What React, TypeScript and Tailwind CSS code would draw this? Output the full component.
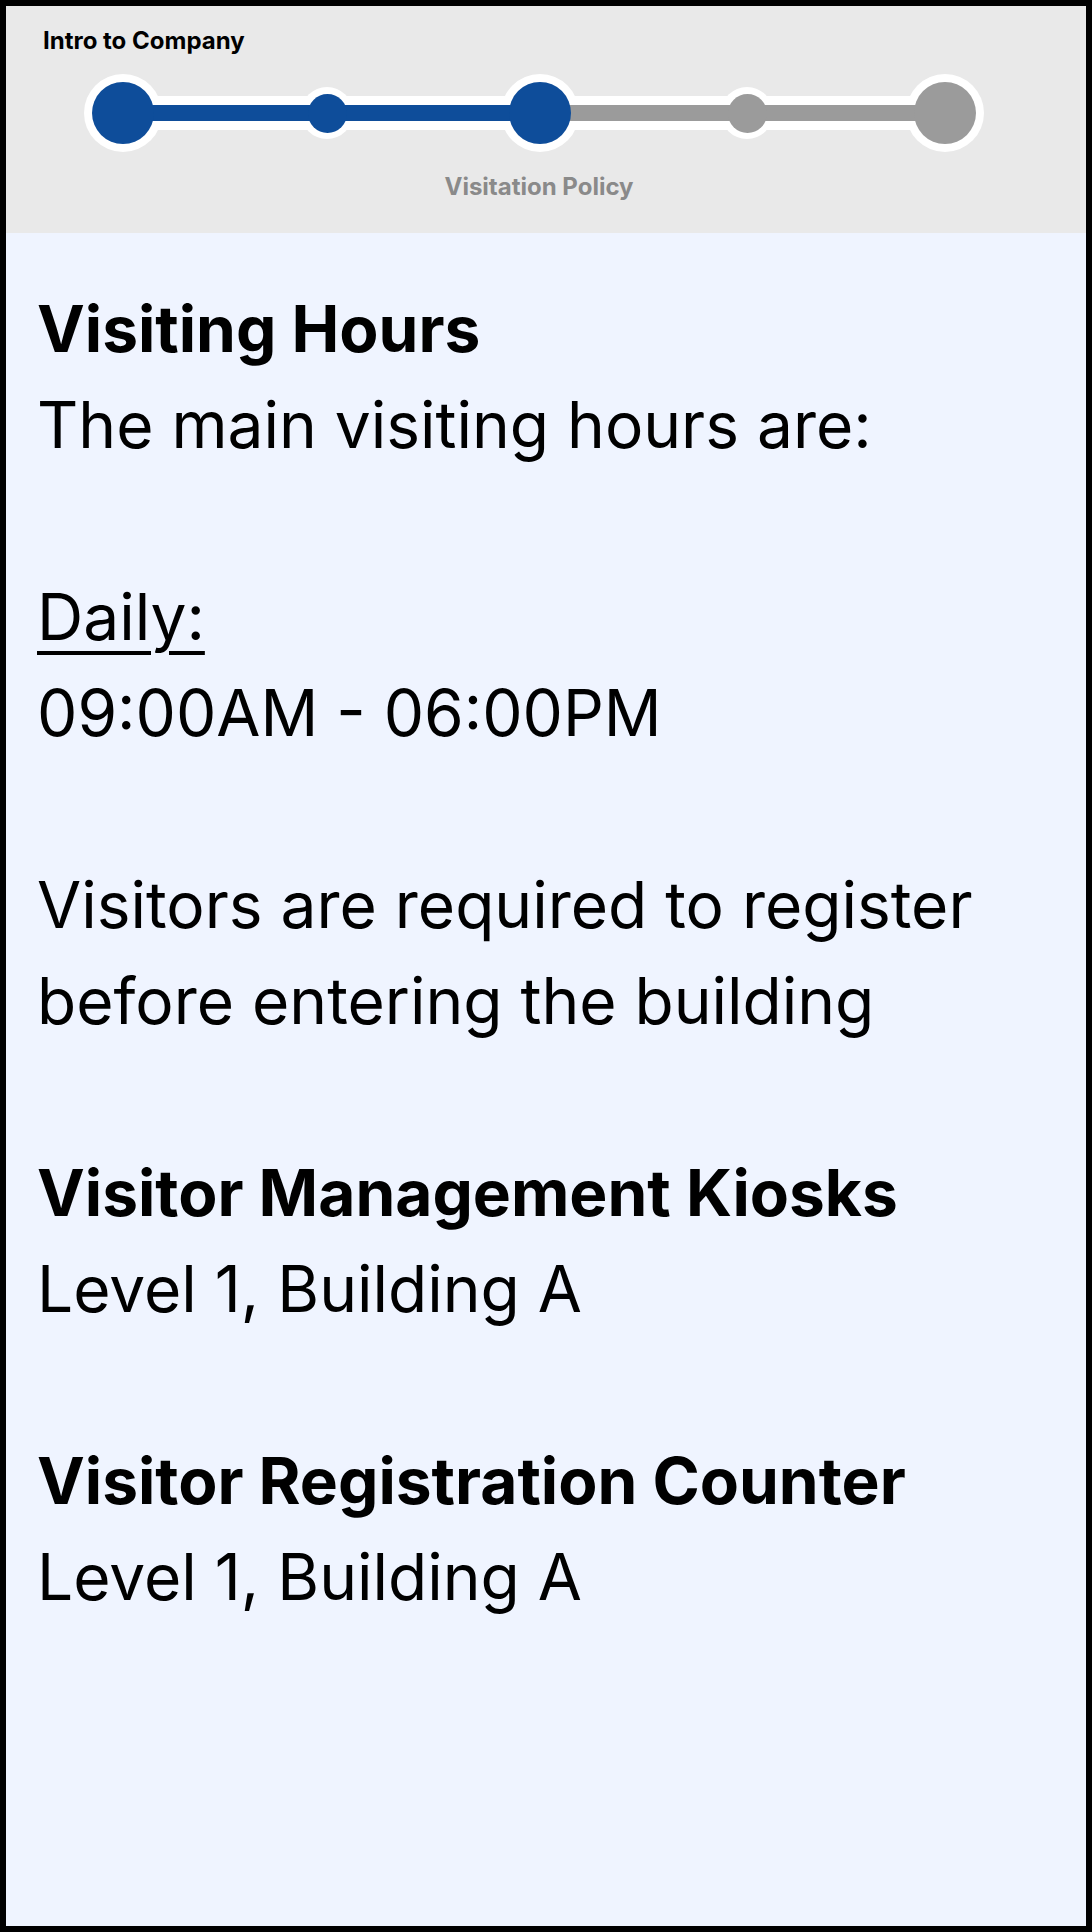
const steps = [
  { big: true, done: true, gap: 139 },
  { big: false, done: true, gap: 148 },
  { big: true, done: true, gap: 142 },
  { big: false, done: false, gap: 133 },
  { big: true, done: false, gap: 0 },
];

const gapClass: Record<number, string> = {
  139: "w-[139px]",
  148: "w-[148px]",
  142: "w-[142px]",
  133: "w-[133px]",
  0: "w-0",
};

const Stepper = () => {
  return (
    <div className="grid w-[900px] h-[78px] ml-[78px] items-center">
      {/* white track + rings */}
      <div className="col-start-1 row-start-1 mx-[39px] h-[34px] bg-white" />
      <div className="col-start-1 row-start-1 flex items-center">
        {steps.map((s, i) => (
          <div key={i} className="flex items-center">
            <div
              className={`rounded-full bg-white ${s.big ? "w-[78px] h-[78px]" : "w-[52px] h-[52px]"}`}
            />
            <div className={gapClass[s.gap]} />
          </div>
        ))}
      </div>
      {/* coloured track */}
      <div className="col-start-1 row-start-1 mx-[39px] h-[16px] flex">
        <div className="w-[417px] bg-[#0e4d9a]" />
        <div className="flex-1 bg-[#9b9b9b]" />
      </div>
      <div className="col-start-1 row-start-1 flex items-center">
        {steps.map((s, i) => (
          <div key={i} className="flex items-center">
            <div
              className={`flex items-center justify-center ${s.big ? "w-[78px] h-[78px]" : "w-[52px] h-[52px]"}`}
            >
              <div
                className={`rounded-full ${s.big ? "w-[62px] h-[62px]" : "w-[39px] h-[39px]"} ${
                  s.done ? "bg-[#0e4d9a]" : "bg-[#9b9b9b]"
                }`}
              />
            </div>
            <div className={gapClass[s.gap]} />
          </div>
        ))}
      </div>
    </div>
  );
};

export default function App() {
  return (
    <div className="w-[1092px] h-[1932px] border-[6px] border-black bg-[#eff4ff] flex flex-col font-[Inter,sans-serif] text-black">
      <div className="bg-[#e9e9e9] h-[227px] pt-[21px]">
        <div className="pl-[37px] text-[24px] leading-[28px] font-bold">Intro to Company</div>
        <div className="mt-[19px]">
          <Stepper />
        </div>
        <div className="w-[900px] ml-[78px] pl-[10px] mt-[21px] text-center text-[24px] leading-[28px] font-bold text-[#8a8a8a]">
          Visitation Policy
        </div>
      </div>
      <div className="pl-[31px] pt-[48px] text-[64px] leading-[96px]">
        <div className="font-bold">Visiting Hours</div>
        <div>The main visiting hours are:</div>
        <div className="h-[96px]" />
        <div>
          <span className="underline decoration-[4px] underline-offset-[11px]">Daily:</span>
        </div>
        <div>09:00AM - 06:00PM</div>
        <div className="h-[96px]" />
        <div>Visitors are required to register</div>
        <div>before entering the building</div>
        <div className="h-[96px]" />
        <div className="font-bold">Visitor Management Kiosks</div>
        <div>Level 1, Building A</div>
        <div className="h-[96px]" />
        <div className="font-bold">Visitor Registration Counter</div>
        <div>Level 1, Building A</div>
      </div>
    </div>
  );
}
